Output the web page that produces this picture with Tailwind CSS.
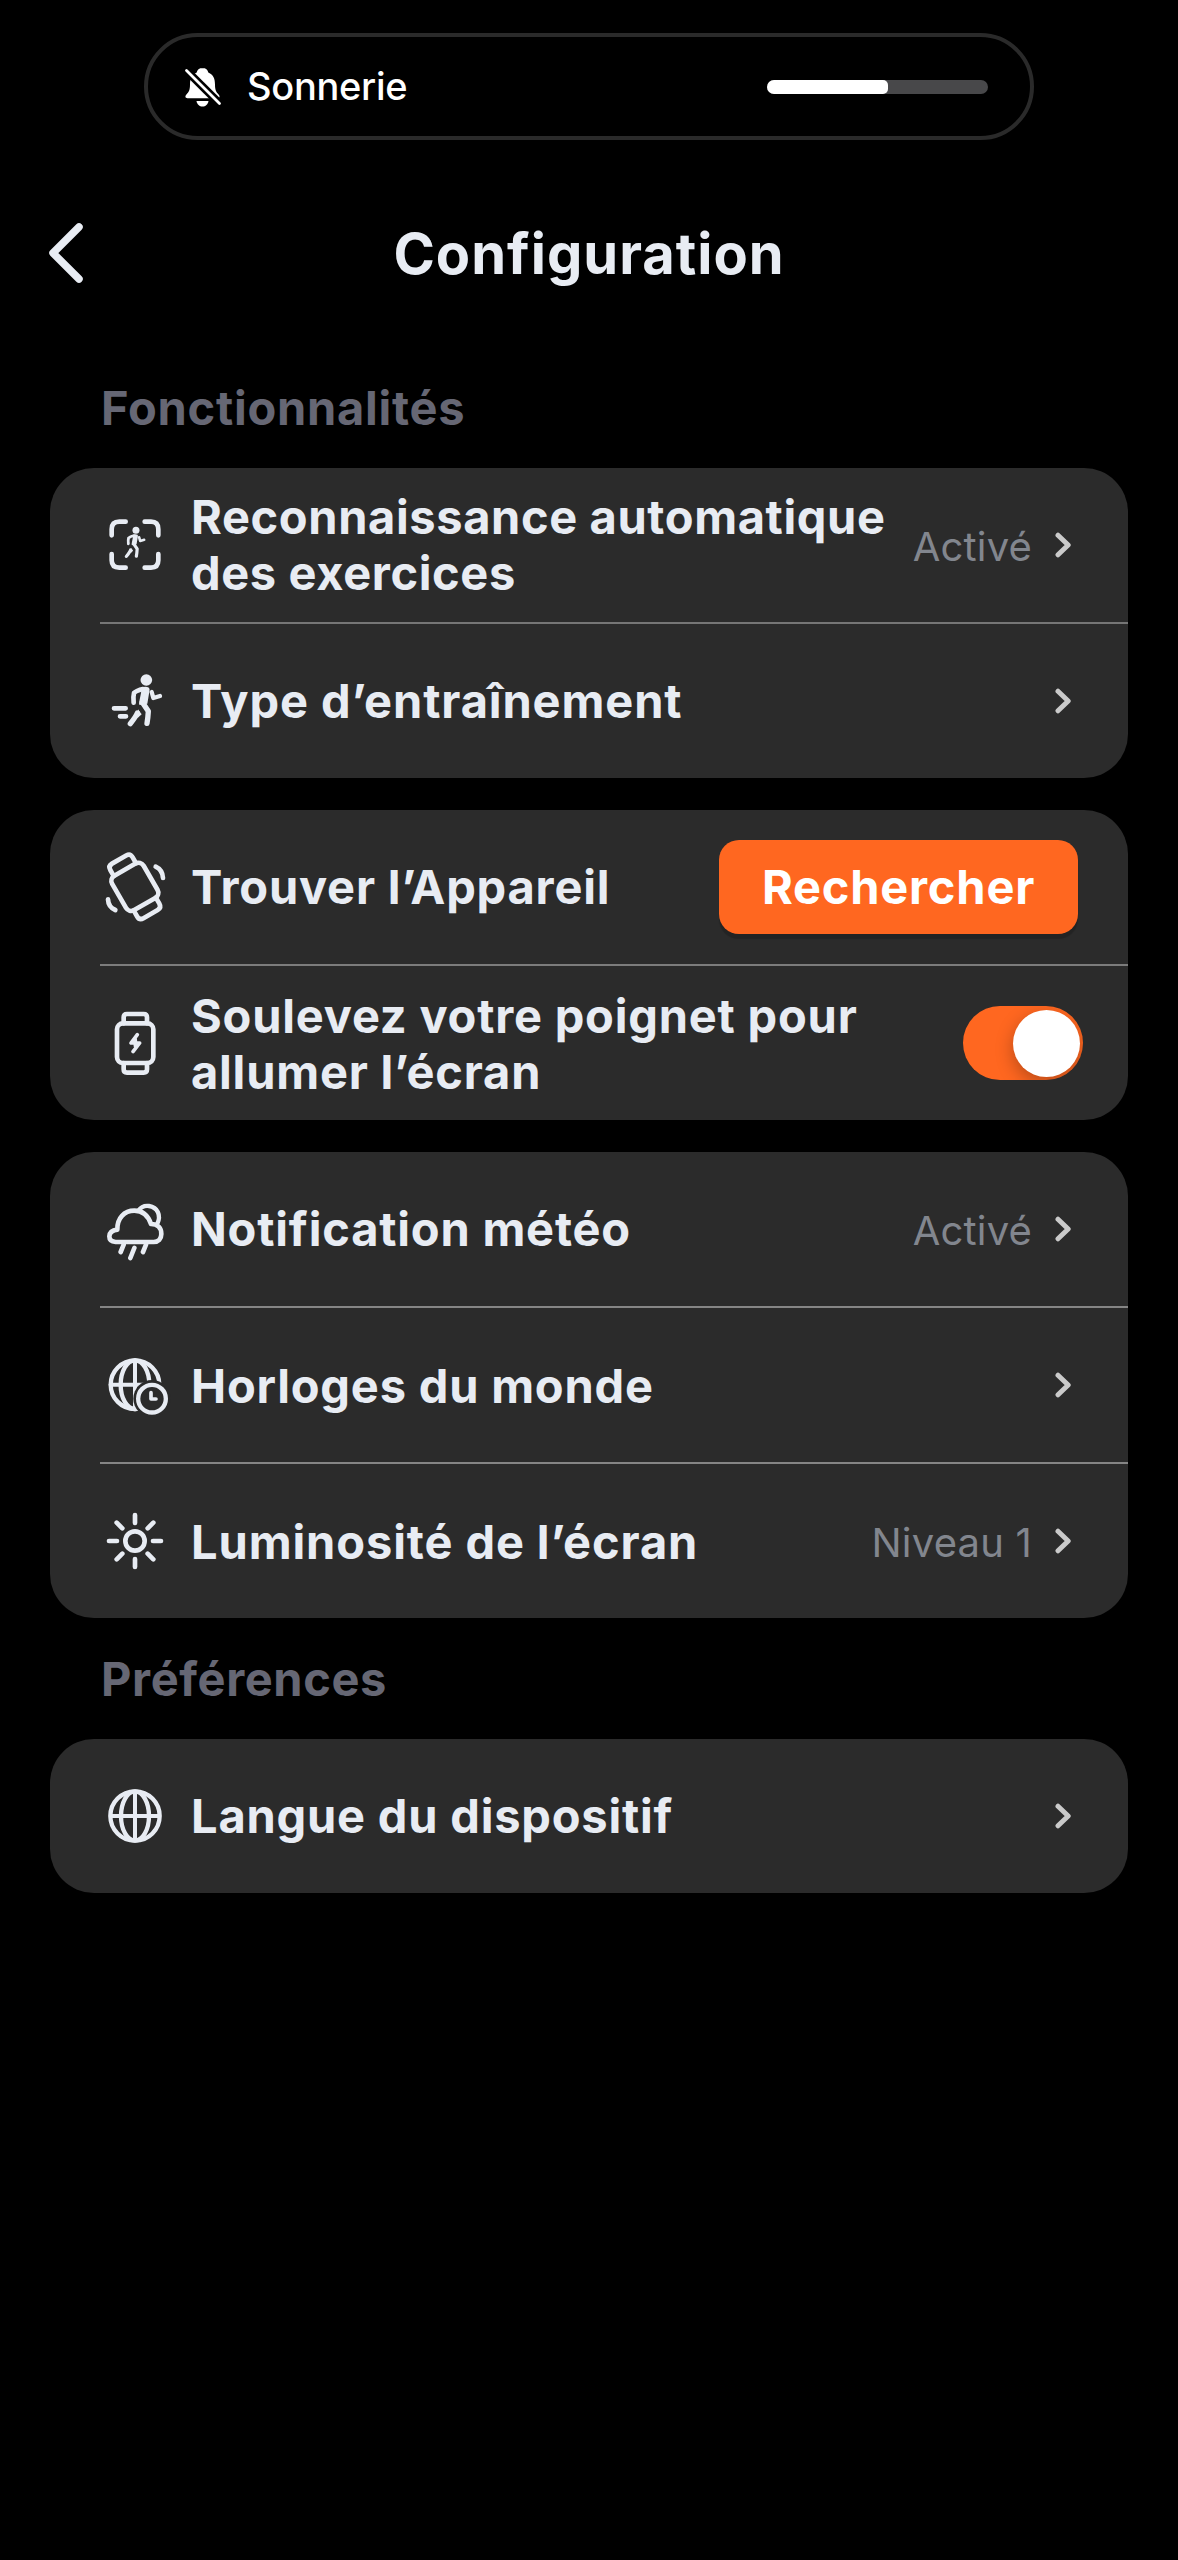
<!DOCTYPE html>
<html lang="fr">
<head>
<meta charset="utf-8">
<title>Configuration</title>
<script src="https://cdn.jsdelivr.net/npm/@tailwindcss/browser@4"></script>
</head>
<body class="min-h-screen bg-black pt-[33px] font-[Inter,sans-serif] text-[#e8ecf3]">

<svg width="0" height="0" class="absolute">
  <defs>
    <g id="chevron"><path d="M3 3.2 L13.2 13 L3 22.8" fill="none" stroke="#cacaca" stroke-width="5" stroke-linecap="round" stroke-linejoin="round"/></g>
    <g id="runner">
      <circle cx="154" cy="540" r="17.500"/>
      <path d="M140 564 Q150 557 162 563 Q165 567 163 575 L157 611 L134 615 Q131 612 133 604 L138 579 Z"/>
      <path d="M144 567 Q125 571 117 579 Q114 590 116 608" fill="none" stroke="#e8ecf3" stroke-width="14" stroke-linecap="round" stroke-linejoin="round"/>
      <path d="M142 607 L160 634 Q159 652 156 670" fill="none" stroke="#e8ecf3" stroke-width="16" stroke-linecap="round" stroke-linejoin="round"/>
      <path d="M127 639 Q124 648 106 671" fill="none" stroke="#e8ecf3" stroke-width="16" stroke-linecap="round" stroke-linejoin="round"/>
      <path d="M129 628 L140 643 L127 655 Z"/>
      <path d="M170 576 L175 594 L195 588" fill="none" stroke="#e8ecf3" stroke-width="13" stroke-linecap="round" stroke-linejoin="round"/>
    </g>
  </defs>
</svg>

<!-- ringer volume banner -->
<div class="mx-[144px] flex h-[107px] items-center rounded-[54px] border-4 border-[#2a2a2a] pr-[42px] pl-[36px] text-white">
  <svg width="38" height="42" viewBox="184 66 38 42" class="shrink-0">
    <path fill="#fff" d="M202.500 68 c-3.300 0 -5.400 2 -5.800 4.500 c-5.200 2.200 -6.700 6.500 -6.700 12 c0 5.500 -1.200 7.500 -3.600 10 c-1.600 1.800 -1.200 3.700 1 3.700 h30.200 c2.200 0 2.600 -1.900 1 -3.700 c-2.400 -2.500 -3.600 -4.500 -3.600 -10 c0 -5.500 -1.500 -9.800 -6.700 -12 c-.4 -2.500 -2.500 -4.500 -5.800 -4.500z"/>
    <path fill="#fff" d="M196.500 101 h12 c-.5 3.500 -3 5.500 -6 5.500 s-5.500 -2 -6 -5.500z"/>
    <path d="M186.500 70.500 L219.500 103.500" stroke="#000" stroke-width="8"/>
    <path d="M186.500 70.500 L219.500 103.500" stroke="#fff" stroke-width="2.800" stroke-linecap="round"/>
  </svg>
  <span class="ml-[25px] pb-[2px] text-[38px] leading-none font-medium tracking-[-.3px]">Sonnerie</span>
  <div class="ml-auto h-[14px] w-[221px] overflow-hidden rounded-full bg-[#48484a]">
    <div class="h-full w-[121px] rounded-r-[5px] bg-white"></div>
  </div>
</div>

<header class="grid h-[226px] grid-cols-[1fr_auto_1fr] items-center px-[48px]">
  <svg width="38" height="62" viewBox="0 0 38 62" class="shrink-0"><path d="M31 5 L5 31 L31 57" fill="none" stroke="#e8ecf3" stroke-width="7.500" stroke-linecap="round" stroke-linejoin="round"/></svg>
  <h1 class="pt-[2px] text-[56px] leading-[68px] font-bold tracking-[1px]">Configuration</h1>
  <span></span>
</header>

<main class="px-[50px]">
  <h2 class="mb-[18px] flex h-[84px] items-center pl-[51px] text-[47px] font-bold tracking-[.75px] text-[#666774]">Fonctionnalités</h2>

  <div class="flex flex-col gap-8">
    <section class="overflow-hidden rounded-[44px] bg-[#2b2b2b] text-[47px] leading-[56px] font-bold tracking-[.8px] whitespace-nowrap">
      <div class="flex h-[154px] items-center gap-6 pr-[56px] pl-[53px]">
        <svg width="64" height="64" viewBox="24 39 192 192" class="shrink-0" fill="#e8ecf3">
          <path d="M50 106 V88 Q50 65 73 65 H92 M149 65 H168 Q190 65 190 88 V106 M190 162 V181 Q190 203 168 203 H149 M92 203 H73 Q50 203 50 181 V162" fill="none" stroke="#e8ecf3" stroke-width="14" stroke-linecap="round"/>
          <use href="#runner" transform="translate(30.500 -233.500) scale(.6)"/>
        </svg>
        <p class="tracking-[.62px]">Reconnaissance automatique<br>des exercices</p>
        <span class="ml-auto pt-[3px] text-[40px] font-normal tracking-[.15px] text-[#82868e]">Activé</span>
        <svg width="17" height="26" viewBox="0 0 17 26" class="-ml-[1px] shrink-0"><use href="#chevron"/></svg>
      </div>
      <div class="ml-[50px] h-[2px] bg-[#767676]"></div>
      <div class="flex h-[154px] items-center gap-6 pr-[56px] pl-[53px]">
        <svg width="64" height="64" viewBox="24 507 192 192" class="shrink-0" fill="#e8ecf3">
          <use href="#runner"/>
          <path d="M57 625 H92 M75 649 H93" stroke="#e8ecf3" stroke-width="14" stroke-linecap="round"/>
        </svg>
        <p class="tracking-[.9px]">Type d’entraînement</p>
        <svg width="17" height="26" viewBox="0 0 17 26" class="ml-auto shrink-0"><use href="#chevron"/></svg>
      </div>
    </section>

    <section class="overflow-hidden rounded-[44px] bg-[#2b2b2b] text-[47px] leading-[56px] font-bold tracking-[.8px] whitespace-nowrap">
      <div class="flex h-[154px] items-center gap-6 pr-[50px] pl-[53px]">
        <svg width="64" height="64" viewBox="24 45 192 192" class="shrink-0 overflow-visible" fill="none" stroke="#e8ecf3" stroke-width="14" stroke-linecap="round" stroke-linejoin="round">
          <g transform="rotate(-30 119.500 140.500)">
            <rect x="65" y="81" width="109" height="119" rx="18"/>
            <path d="M81 81 V60 Q81 46 95 46 H144 Q158 46 158 60 V81 M81 200 V221 Q81 235 95 235 H144 Q158 235 158 221 V200"/>
          </g>
          <path d="M182 80 Q203 90 204 114 M39 178 Q40 201 61 210"/>
        </svg>
        <p>Trouver l’Appareil</p>
        <button class="ml-auto h-[94px] w-[359px] rounded-[20px] bg-[#ff6720] font-bold tracking-[.8px] text-white shadow-[0_5px_1px_rgba(0,0,0,0.18)]">Rechercher</button>
      </div>
      <div class="ml-[50px] h-[2px] bg-[#7c7c7c]"></div>
      <div class="flex h-[154px] items-center gap-6 pr-[45px] pl-[53px]">
        <svg width="64" height="64" viewBox="24 513 192 192" class="shrink-0" fill="none" stroke="#e8ecf3" stroke-width="14" stroke-linecap="round" stroke-linejoin="round">
          <rect x="66" y="550" width="109" height="119" rx="18"/>
          <path d="M86 550 V532 Q86 522 96 522 H146 Q156 522 156 532 V550 M86 669 V688 Q86 698 96 698 H146 Q156 698 156 688 V669"/>
          <path d="M127 584 L108 609 L134 609 L114 635" stroke-width="11"/>
          <path d="M120 598 L122 619" stroke-width="12"/>
        </svg>
        <p class="pt-[1px]">Soulevez votre poignet pour<br>allumer l’écran</p>
        <div class="ml-auto flex h-[74px] w-[120px] items-center justify-end overflow-hidden rounded-full bg-[#ff6720] pr-[3px]">
          <div class="size-[67px] rounded-full bg-white shadow-[0_6px_18px_rgba(0,0,0,0.28)]"></div>
        </div>
      </div>
    </section>

    <section class="overflow-hidden rounded-[44px] bg-[#2b2b2b] text-[47px] leading-[56px] font-bold tracking-[.8px] whitespace-nowrap">
      <div class="flex h-[154px] items-center gap-6 pr-[56px] pl-[53px]">
        <svg width="64" height="64" viewBox="24 21 192 192" class="shrink-0" fill="none" stroke="#e8ecf3" stroke-width="14" stroke-linecap="round" stroke-linejoin="round">
          <path d="M62 156 Q43 155 43 139 Q44 122 67 119 C66 84 88 62 118 62 C146 62 160 79 168 102 C188 102 199 114 199 132 C199 147 190 156 176 156 Z"/>
          <path d="M130 62 Q142 45 162 48 C188 52 199 76 187 101" stroke-width="13"/>
          <path d="M86 164 L77 186 M118 174 L106 204 M153 164 L144 186"/>
        </svg>
        <p>Notification météo</p>
        <span class="ml-auto pt-[3px] text-[40px] font-normal tracking-[.15px] text-[#82868e]">Activé</span>
        <svg width="17" height="26" viewBox="0 0 17 26" class="-ml-[1px] shrink-0"><use href="#chevron"/></svg>
      </div>
      <div class="ml-[50px] h-[2px] bg-[#858585]"></div>
      <div class="flex h-[154px] items-center gap-6 pr-[56px] pl-[53px]">
        <svg width="64" height="64" viewBox="24 491 192 192" class="shrink-0 overflow-visible" fill="none" stroke="#e8ecf3" stroke-width="13" stroke-linecap="round" stroke-linejoin="round">
          <circle cx="120" cy="586" r="73"/>
          <ellipse cx="120" cy="586" rx="43" ry="73"/>
          <path d="M120 513 V659 M47 586 H193" stroke-width="12"/>
          <circle cx="171" cy="628" r="56" fill="#2b2b2b" stroke="none"/>
          <circle cx="171" cy="628" r="41.500"/>
          <path d="M168 610 V629 H183" stroke-width="11"/>
        </svg>
        <p class="pt-[2px]">Horloges du monde</p>
        <svg width="17" height="26" viewBox="0 0 17 26" class="ml-auto shrink-0"><use href="#chevron"/></svg>
      </div>
      <div class="ml-[50px] h-[2px] bg-[#858585]"></div>
      <div class="flex h-[154px] items-center gap-6 pr-[56px] pl-[53px]">
        <svg width="64" height="64" viewBox="24 959 192 192" class="shrink-0" fill="none" stroke="#e8ecf3" stroke-width="14" stroke-linecap="round">
          <circle cx="120" cy="1055" r="29"/>
          <path d="M120 977 V1001 M120 1109 V1133 M42 1055 H66 M174 1055 H198 M65 1000 L82 1017 M158 1093 L175 1110 M175 1000 L158 1017 M82 1093 L65 1110"/>
        </svg>
        <p class="pt-[2px] tracking-[.9px]">Luminosité de l’écran</p>
        <span class="ml-auto pt-[4px] text-[40px] font-normal tracking-[.2px] text-[#82868e]">Niveau 1</span>
        <svg width="17" height="26" viewBox="0 0 17 26" class="-ml-[1px] shrink-0"><use href="#chevron"/></svg>
      </div>
    </section>
  </div>

  <h2 class="flex h-[121px] items-center pt-[2px] pl-[51px] text-[47px] font-bold tracking-[.6px] text-[#666774]">Préférences</h2>

  <section class="overflow-hidden rounded-[44px] bg-[#2b2b2b] text-[47px] leading-[56px] font-bold tracking-[.8px] whitespace-nowrap">
    <div class="flex h-[154px] items-center gap-6 pr-[56px] pl-[53px]">
      <svg width="64" height="64" viewBox="24 490 192 192" class="shrink-0" fill="none" stroke="#e8ecf3" stroke-width="13">
        <circle cx="120" cy="586" r="74"/>
        <ellipse cx="120" cy="586" rx="42" ry="74"/>
        <path d="M120 512 V660 M46 586 H194" stroke-width="12"/>
      </svg>
      <p>Langue du dispositif</p>
      <svg width="17" height="26" viewBox="0 0 17 26" class="ml-auto shrink-0"><use href="#chevron"/></svg>
    </div>
  </section>
</main>
</body>
</html>
